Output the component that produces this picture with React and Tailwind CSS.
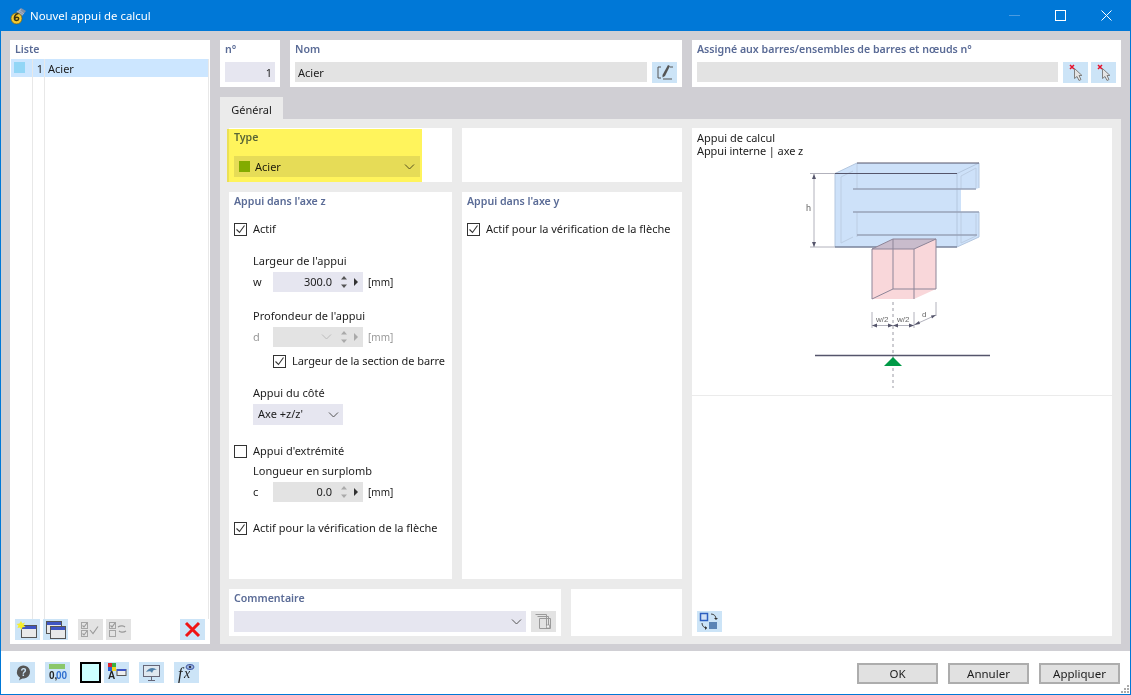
import React from 'react';

const IconBtn = ({ children, off, className = '' }) => (
  <div className={`w-[25px] h-[21px] shrink-0 flex items-center justify-center ${off ? 'bg-[#e3e3e3]' : 'bg-[#cce4f7]'} ${className}`}>
    <svg width="25" height="21" viewBox="0 0 25 21">{children}</svg>
  </div>
);

const Title = ({ children, className = '' }) => (
  <div className={`h-[18px] leading-[18px] text-[10.6px] font-semibold text-[#5a6b96] whitespace-nowrap ${className}`}>{children}</div>
);

const Check = ({ on, className = '' }) => (
  <svg width="13" height="13" viewBox="0 0 13 13" className={`shrink-0 ${className}`}>
    <rect x="0.5" y="0.5" width="12" height="12" fill="#fff" stroke="#333" />
    {on && <path d="M2.5 6.5l3 3 5-7" fill="none" stroke="#333" strokeWidth="1.1" />}
  </svg>
);

const Chevron = ({ color = '#555' }) => (
  <svg width="11" height="6" viewBox="0 0 11 6" className="shrink-0"><path d="M1 .5l4.500 4.500L10 .5" fill="none" stroke={color} /></svg>
);

const Spin = ({ up = '#555', right = '#333' }) => (
  <div className="flex items-center shrink-0">
    <svg width="8" height="14" viewBox="0 0 8 14"><path d="M4 1l3 3.500H1zM4 13l3-3.500H1z" fill={up} /></svg>
    <svg width="6" height="8" viewBox="0 0 6 8" className="ml-[5px] mr-[4px]"><path d="M1 0l4 4-4 4z" fill={right} /></svg>
  </div>
);

const NumRow = ({ name, value, bg, dim, drop }) => (
  <div className="flex items-center h-[20px] mt-[3px]">
    <span className={`w-[20px] ${dim ? 'text-[#999]' : ''}`}>{name}</span>
    <div className={`w-[90px] h-[20px] flex items-center justify-end ${bg}`}>
      {drop && <Chevron color="#bbb" />}
      <span className="mr-[8px]">{value}</span>
      {dim ? <Spin up="#aaa" right="#aaa" /> : <Spin up={value === '0.0' ? '#aaa' : '#555'} />}
    </div>
    <span className={`ml-[5px] text-[10px] ${dim ? 'text-[#999]' : ''}`}>[mm]</span>
  </div>
);

const Window = ({ x, y }) => (
  <g transform={`translate(${x} ${y})`}>
    <rect x="0.5" y="0.5" width="15" height="12" fill="#e9e9e9" stroke="#555" />
    <rect x="1" y="1" width="14" height="3" fill="#3e55c4" />
  </g>
);

const Cursor = () => (
  <>
    <path d="M11.500 6.500l0 10 2.500-2 2 4 2-1-2-4 3 0z" fill="#e4e4e4" stroke="#808080" />
    <path d="M7 3l4 4M11 3l-4 4" stroke="#e8102a" strokeWidth="1.500" />
  </>
);

const Diagram = () => (
  <svg width="200" height="240" viewBox="800 155 200 240" className="block ml-[108px] -mt-[2px]">
    {/* poutre */}
    <path d="M835 173.500L857 163H979V188L976 189H961V212H979V237L957 247H835Z" fill="#cde1f9" />
    <path d="M857 163V189M857 212V237M841 177V243L853 237M961 176V189M961 212V243M976 168V188M976 214V236L961 243M961 176L976 168M841 177L853 171" fill="none" stroke="#bccde3" />
    <path d="M835 173.500V247M835 173.500L857 163M957 173.500L979 163M979 163V188M979 212V237L957 247M957 173.500V247" fill="none" stroke="#b4c7df" />
    <path d="M853 189H976M853 212H979M857 235H977" fill="none" stroke="#98a3b8" strokeWidth="1.500" />
    <path d="M835 173.500H957M857 163H979" fill="none" stroke="#55556b" />
    <path d="M835 247H957" stroke="#78839b" strokeWidth="1.600" />
    {/* appui */}
    <path d="M872 249L893 239H936V289L914 299H872Z" fill="#f9d7da" />
    <path d="M872 249L893 239H936L914 249Z" fill="#c9bccc" />
    <path d="M872 249H914V299M872 249V299M893 239V289H936V239H893L872 249M914 249L936 239M872 299L893 289" fill="none" stroke="#8d8598" />
    {/* cotes */}
    <path d="M810 173.500H835M810 247H835M814 174V247" fill="none" stroke="#b2b2bc" />
    <path d="M814 174l-2 5h4zM814 247l-2-5h4z" fill="#55556b" />
    <text x="806" y="211" fontSize="9" fill="#666" fontFamily="Liberation Sans, sans-serif">h</text>
    <path d="M872 312V328M914 312V328M936 302V316M872 325.500H914M914 325L936 315" fill="none" stroke="#b2b2bc" />
    <path d="M872 325.500l5-2v4zM893 325.500l-5-2v4zM893 325.500l5-2v4zM914 325.500l-5-2v4zM914 325l5-4 1 3zM936 315l-5 .5 1 3z" fill="#55556b" />
    <text x="876" y="322" fontSize="8" fill="#666" fontFamily="Liberation Sans, sans-serif">w/2</text>
    <text x="897" y="322" fontSize="8" fill="#666" fontFamily="Liberation Sans, sans-serif">w/2</text>
    <text x="922" y="317" fontSize="8" fill="#666" fontFamily="Liberation Sans, sans-serif">d</text>
    <path d="M893 302V388" stroke="#9a9aa4" strokeDasharray="3 3" />
    <path d="M815 355.500H990" stroke="#55556b" strokeWidth="1.600" />
    <path d="M893 357L902 366H884Z" fill="#009a46" />
  </svg>
);

export default function App() {
  return (
    <div className="w-[1131px] h-[695px] flex flex-col bg-white border border-[#0078d7] overflow-hidden text-[11px] text-[#1c1c1c] font-['Noto_Sans',sans-serif]">
      {/* barre de titre */}
      <div className="h-[30px] shrink-0 bg-[#0078d7] flex items-center text-white">
        <svg width="18" height="18" viewBox="0 0 18 18" className="ml-[8px]">
          <path d="M7 5l5-4 5 3-4 5z" fill="#7f8fa8" />
          <path d="M8 4l6 4M10 3l5 4M12 2l-4 5" stroke="#c6d0de" strokeWidth=".6" />
          <circle cx="7.500" cy="11.500" r="5.500" fill="#f4c92f" stroke="#6b5a14" strokeWidth=".7" />
          <path d="M9.500 6.500C6.500 7 5 9.500 5.500 12c.4 2 4 2 4.200-.2.1-1.900-3-2.100-3.800-.4" fill="none" stroke="#3a3210" strokeWidth="1.500" />
        </svg>
        <span className="ml-[3px] text-[11.4px]">Nouvel appui de calcul</span>
        <div className="ml-auto flex items-center -mt-px">
          <span className="w-[11px] h-px bg-[#4a9be0]" />
          <span className="ml-[35px] w-[11px] h-[11px] border border-white" />
          <svg width="11" height="11" viewBox="0 0 11 11" className="ml-[35px] mr-[18px]"><path d="M.5.5l10 10M10.500.5l-10 10" stroke="#fff" /></svg>
        </div>
      </div>

      {/* corps */}
      <div className="flex-1 min-h-0 bg-[#d0cfd4] flex gap-[10px] pl-[9px] pr-[9px] pt-[9px] pb-[7px]">
        {/* liste */}
        <div className="w-[200px] bg-white flex flex-col px-px">
          <Title className="pl-[4px]">Liste</Title>
          <div className="h-[18px] mt-px bg-[#cce6ff] flex items-start border-r border-[#e8e8e8]">
            <span className="w-[22px] h-full border-r border-[#e8e8e8] flex items-start pl-[3px] pt-[3px]"><span className="w-[11px] h-[11px] bg-[#92d6f6]" /></span>
            <span className="w-[12px] h-full border-r border-[#e8e8e8] text-right pr-[1px] leading-[20px]">1</span>
            <span className="pl-[3px] leading-[20px]">Acier</span>
          </div>
          <div className="flex-1 flex border-r border-[#e8e8e8]">
            <span className="w-[22px] border-r border-[#e8e8e8]" />
            <span className="w-[12px] border-r border-[#e8e8e8]" />
          </div>
          <div className="h-[25px] pb-[4px] flex items-start pl-[4px] pr-[4px]">
            <IconBtn>
              <Window x="6" y="6" />
              <path d="M6 2l1.300 2.500L10 3.500 8.500 6l2 2-3 .2L6.500 11 5 8.500 2.500 9l1-2.500L1.500 5l3-.5z" fill="#f7ee2a" />
            </IconBtn>
            <IconBtn className="ml-[3px]"><Window x="3" y="2" /><Window x="7" y="7" /></IconBtn>
            <IconBtn off className="ml-[10px]">
              <rect x="3.500" y="3.500" width="6" height="6" fill="none" stroke="#a5a5a5" /><rect x="3.500" y="11.500" width="6" height="6" fill="none" stroke="#a5a5a5" />
              <path d="M4.500 6.500l1.500 1.500 3-4M4.500 14.500l1.500 1.500 3-4M12 11l3 3.500 5-7" fill="none" stroke="#999" strokeWidth="1.100" />
            </IconBtn>
            <IconBtn off className="ml-[3px]">
              <rect x="3.500" y="3.500" width="6" height="6" fill="none" stroke="#a5a5a5" /><rect x="3.500" y="11.500" width="6" height="6" fill="none" stroke="#a5a5a5" />
              <path d="M4.500 6.500l1.500 1.500 3-4M12 8c3-2 6-1 7 0M20 12c-3 2-6 1-7 0" fill="none" stroke="#999" strokeWidth="1.200" />
            </IconBtn>
            <IconBtn className="ml-auto"><path d="M6 4l13 13M19 4L6 17" stroke="#f01414" strokeWidth="3" /></IconBtn>
          </div>
        </div>

        {/* partie droite */}
        <div className="flex-1 min-w-0 flex flex-col">
          <div className="flex gap-[10px] h-[47px] shrink-0">
            <div className="w-[60px] bg-white px-[5px]">
              <Title>n°</Title>
              <div className="h-[20px] mt-[4px] bg-[#e6e6f0] text-right pr-[3px] leading-[21px]">1</div>
            </div>
            <div className="w-[392px] bg-white px-[5px]">
              <Title>Nom</Title>
              <div className="flex gap-[5px] mt-[4px]">
                <div className="flex-1 h-[20px] bg-[#e3e3e3] pl-[3px] leading-[21px]">Acier</div>
                <IconBtn>
                  <path d="M9 5H6v11h3M11 17h9" fill="none" stroke="#555" />
                  <path d="M16 3l2 1-5 10-2.500 1.500L10.500 13z" fill="#555" />
                  <path d="M18 5h3" stroke="#555" />
                </IconBtn>
              </div>
            </div>
            <div className="flex-1 bg-white px-[5px]">
              <Title>Assigné aux barres/ensembles de barres et nœuds n°</Title>
              <div className="flex mt-[4px]">
                <div className="flex-1 h-[20px] bg-[#e3e3e3]" />
                <IconBtn className="ml-[5px]"><Cursor /></IconBtn>
                <IconBtn className="ml-[3px]"><Cursor /></IconBtn>
              </div>
            </div>
          </div>

          <div className="h-[22px] mt-[10px] shrink-0 flex">
            <div className="w-[63px] bg-[#ebebeb] text-center leading-[26px]">Général</div>
          </div>

          <div className="flex-1 min-h-0 bg-[#ebebeb] p-[9px] pb-[8px] flex gap-[10px]">
            <div className="w-[453px] flex flex-col gap-[10px]">
              <div className="flex gap-[10px] h-[54px] shrink-0">
                <div className="w-[223px] bg-white relative px-[5px]">
                  <Title>Type</Title>
                  <div className="mt-[10px] h-[21px] w-[186px] bg-[#e6e6f0] flex items-center pl-[5px] pr-[5px]">
                    <span className="w-[11px] h-[11px] bg-[#83b300]" />
                    <span className="ml-[5px] pt-[2px]">Acier</span>
                    <span className="ml-auto"><Chevron /></span>
                  </div>
                  <div className="absolute left-[-2px] top-[1px] w-[195px] h-[53px] bg-[#fff45c] mix-blend-multiply pointer-events-none" />
                </div>
                <div className="flex-1 bg-white" />
              </div>

              <div className="flex-1 min-h-0 flex gap-[10px]">
                <div className="w-[223px] bg-white px-[5px]">
                  <Title>Appui dans l'axe z</Title>
                  <div className="flex items-center h-[14px] mt-[12px]"><Check on /><span className="ml-[6px]">Actif</span></div>
                  <div className="pl-[19px]">
                    <div className="h-[16px] leading-[16px] mt-[17px]">Largeur de l'appui</div>
                    <NumRow name="w" value="300.0" bg="bg-[#e6e6f0]" />
                    <div className="h-[16px] leading-[16px] mt-[16px]">Profondeur de l'appui</div>
                    <NumRow name="d" value="" bg="bg-[#e3e3e3]" dim drop />
                    <div className="flex items-center h-[14px] mt-[7px] pl-[20px] whitespace-nowrap"><Check on /><span className="ml-[6px] tracking-[-0.07px]">Largeur de la section de barre</span></div>
                    <div className="h-[16px] leading-[16px] mt-[17px]">Appui du côté</div>
                    <div className="w-[90px] h-[21px] mt-[3px] bg-[#e6e6f0] flex items-center justify-between pl-[5px] pr-[4px]">
                      <span>Axe +z/z'</span><Chevron />
                    </div>
                  </div>
                  <div className="flex items-center h-[14px] mt-[19px]"><Check /><span className="ml-[6px]">Appui d'extrémité</span></div>
                  <div className="pl-[19px]">
                    <div className="h-[16px] leading-[16px] mt-[5px]">Longueur en surplomb</div>
                    <NumRow name="c" value="0.0" bg="bg-[#e3e3e3]" />
                  </div>
                  <div className="flex items-center h-[14px] mt-[19px] whitespace-nowrap"><Check on /><span className="ml-[6px]">Actif pour la vérification de la flèche</span></div>
                </div>
                <div className="flex-1 bg-white px-[5px]">
                  <Title>Appui dans l'axe y</Title>
                  <div className="flex items-center h-[14px] mt-[12px] whitespace-nowrap"><Check on /><span className="ml-[6px]">Actif pour la vérification de la flèche</span></div>
                </div>
              </div>

              <div className="flex gap-[10px] h-[47px] shrink-0">
                <div className="w-[332px] bg-white px-[5px]">
                  <Title>Commentaire</Title>
                  <div className="flex gap-[5px] mt-[4px]">
                    <div className="flex-1 h-[21px] bg-[#e6e6f0] flex items-center justify-end pr-[4px]"><Chevron /></div>
                    <IconBtn off>
                      <path d="M4.500 3.500h11v11M6.500 5.500h11v11M8.500 7.500h11v10h-11z" fill="none" stroke="#9a9a9a" />
                      <rect x="15.500" y="14" width="3" height="3" fill="#f4f4f4" stroke="#888" strokeWidth=".6" />
                    </IconBtn>
                  </div>
                </div>
                <div className="flex-1 bg-white" />
              </div>
            </div>

            {/* apercu */}
            <div className="flex-1 bg-white flex flex-col">
              <div className="h-[268px] shrink-0 border-b border-[#ebebeb] pt-[3px] overflow-hidden">
                <div className="pl-[5px] leading-[13px]">
                  <div>Appui de calcul</div>
                  <div className="tracking-[-0.1px]">Appui interne | axe z</div>
                </div>
                <Diagram />
              </div>
              <div className="flex-1" />
              <div className="pl-[5px] pb-[4px]">
                <IconBtn>
                  <rect x="3.500" y="2.500" width="7" height="7" fill="#cfe0f5" stroke="#2d5fc0" strokeWidth="1.500" />
                  <rect x="12" y="11" width="8" height="7" fill="#5b84b5" />
                  <path d="M14 3c3 0 5 2 5 5M5 12c0 3 2 5 5 5" fill="none" stroke="#444" />
                  <path d="M19 9l-2-2h4zM10 17l-2 2v-4z" fill="#333" />
                </IconBtn>
              </div>
            </div>
          </div>
        </div>
      </div>

      {/* bas */}
      <div className="h-[43px] shrink-0 relative flex items-center pl-[9px] pr-[10px]">
        <IconBtn>
          <path d="M13 3.500a6.500 6.500 0 0 1 1 13c-2 0-3 .5-5 2l1-3a6.500 6.500 0 0 1 3-12z" fill="#555" />
          <text x="10.500" y="14" fontSize="10" fontWeight="700" fill="#cce4f7" fontFamily="Liberation Sans, sans-serif">?</text>
        </IconBtn>
        <IconBtn className="ml-[10px]">
          <rect x="4" y="2" width="16" height="5" fill="#8bc76a" />
          <text x="4" y="17" fontSize="10" fontWeight="700" fill="#222" fontFamily="Liberation Sans, sans-serif">0,</text>
          <text x="11" y="17" fontSize="10" fontWeight="700" fill="#2f6fd0" fontFamily="Liberation Sans, sans-serif">00</text>
        </IconBtn>
        <div className="ml-[10px] w-[21px] h-[21px] border-2 border-black bg-[#ccffff]" />
        <IconBtn className="ml-[3px]">
          <rect x="4" y="1" width="4" height="4" fill="#e0202a" /><rect x="8" y="1" width="4" height="4" fill="#3cb043" />
          <rect x="4" y="5" width="4" height="4" fill="#2c5fd0" /><rect x="8" y="5" width="4" height="4" fill="#f2d21f" />
          <text x="4" y="17" fontSize="10" fontWeight="700" fill="#222" fontFamily="Liberation Sans, sans-serif">A</text>
          <rect x="13" y="7.500" width="9" height="6" fill="#eee" stroke="#555" /><rect x="13" y="7" width="9" height="2" fill="#3e55c4" />
        </IconBtn>
        <IconBtn className="ml-[10px]">
          <rect x="4.500" y="3.500" width="16" height="11" fill="#dfe7ef" stroke="#667" />
          <path d="M7 10c3-5 8-5 11-2-3-1-4 0-5 3-1-2-3-2-6-1z" fill="#4f7fa8" />
          <path d="M12.500 15v3M9 18.500h7" stroke="#667" />
        </IconBtn>
        <IconBtn className="ml-[10px]">
          <text x="4" y="17" fontSize="16" fontStyle="italic" fill="#222" fontFamily="Liberation Serif, serif">f</text>
          <text x="10" y="16" fontSize="14" fontStyle="italic" fill="#222" fontFamily="Liberation Serif, serif">x</text>
          <ellipse cx="16" cy="5" rx="4" ry="2.500" fill="#9cb6e0" stroke="#3e55a4" />
          <circle cx="16" cy="5" r="1.200" fill="#334" />
        </IconBtn>
        <div className="ml-auto mt-[2px] flex gap-[10px] text-[11.5px]">
          <div className="w-[81px] h-[21px] bg-[#e1e1e1] border-2 border-[#adadad] text-center leading-[17px]">OK</div>
          <div className="w-[81px] h-[21px] bg-[#e1e1e1] border-2 border-[#adadad] text-center leading-[17px]">Annuler</div>
          <div className="w-[81px] h-[21px] bg-[#e1e1e1] border-2 border-[#adadad] text-center leading-[17px]">Appliquer</div>
        </div>
        <svg width="10" height="10" viewBox="0 0 10 10" className="absolute right-0 bottom-0">
          <path d="M7 1h2v2H7zM4 4h2v2H4zM7 4h2v2H7zM1 7h2v2H1zM4 7h2v2H4zM7 7h2v2H7z" fill="#aaa" />
        </svg>
      </div>
    </div>
  );
}
